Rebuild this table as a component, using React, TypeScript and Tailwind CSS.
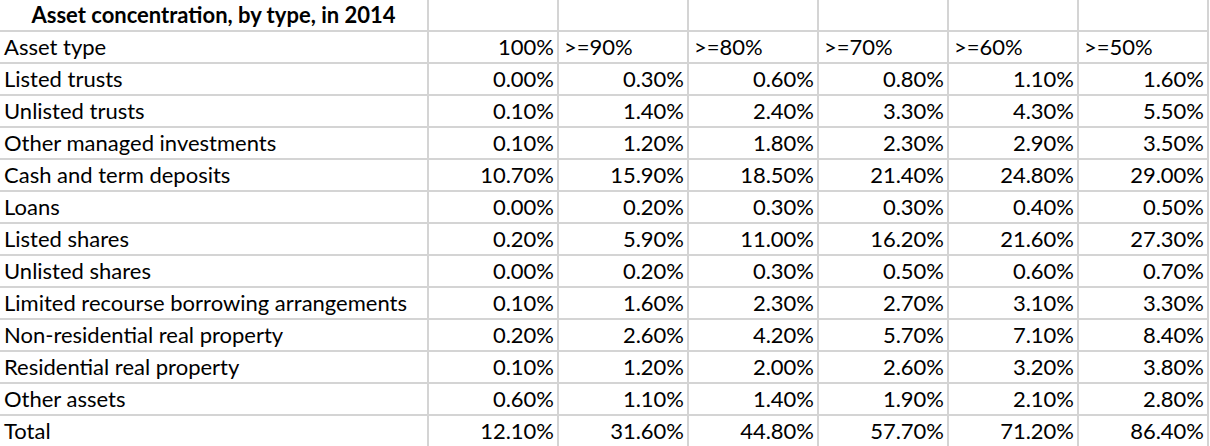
import React from "react";

const cols = ["100%", ">=90%", ">=80%", ">=70%", ">=60%", ">=50%"];
const rows: [string, string[]][] = [
  ["Listed trusts", ["0.00%", "0.30%", "0.60%", "0.80%", "1.10%", "1.60%"]],
  ["Unlisted trusts", ["0.10%", "1.40%", "2.40%", "3.30%", "4.30%", "5.50%"]],
  ["Other managed investments", ["0.10%", "1.20%", "1.80%", "2.30%", "2.90%", "3.50%"]],
  ["Cash and term deposits", ["10.70%", "15.90%", "18.50%", "21.40%", "24.80%", "29.00%"]],
  ["Loans", ["0.00%", "0.20%", "0.30%", "0.30%", "0.40%", "0.50%"]],
  ["Listed shares", ["0.20%", "5.90%", "11.00%", "16.20%", "21.60%", "27.30%"]],
  ["Unlisted shares", ["0.00%", "0.20%", "0.30%", "0.50%", "0.60%", "0.70%"]],
  ["Limited recourse borrowing arrangements", ["0.10%", "1.60%", "2.30%", "2.70%", "3.10%", "3.30%"]],
  ["Non-residential real property", ["0.20%", "2.60%", "4.20%", "5.70%", "7.10%", "8.40%"]],
  ["Residential real property", ["0.10%", "1.20%", "2.00%", "2.60%", "3.20%", "3.80%"]],
  ["Other assets", ["0.60%", "1.10%", "1.40%", "1.90%", "2.10%", "2.80%"]],
  ["Total", ["12.10%", "31.60%", "44.80%", "57.70%", "71.20%", "86.40%"]],
];

const cell = "border-r-2 border-b-2 border-[#d4d4d4] h-[32px] flex items-center overflow-hidden whitespace-nowrap";

export default function App() {
  return (
    <div
      className="w-[1210px] h-[446px] overflow-hidden bg-white text-black text-[22px] leading-none"
      style={{ fontFamily: "Lato, 'Noto Sans', sans-serif" }}
    >
      <div className="grid grid-cols-[429px_repeat(6,130px)]">
        <div className={`${cell} h-[31px] justify-center font-bold`}>Asset concentration, by type, in 2014</div>
        {cols.map((c) => (
          <div key={"t" + c} className={`${cell} h-[31px]`} />
        ))}
        <div className={`${cell} pl-[4px]`}>Asset type</div>
        {cols.map((c, i) => (
          <div key={c} className={`${cell} ${i === 0 ? "justify-end pr-[3px]" : "pl-[5px]"}`}>
            {c}
          </div>
        ))}
        {rows.map(([label, vals]) => (
          <React.Fragment key={label}>
            <div className={`${cell} pl-[4px]`}>{label}</div>
            {vals.map((v, i) => (
              <div key={i} className={`${cell} justify-end pr-[3px]`}>
                {v}
              </div>
            ))}
          </React.Fragment>
        ))}
      </div>
    </div>
  );
}
